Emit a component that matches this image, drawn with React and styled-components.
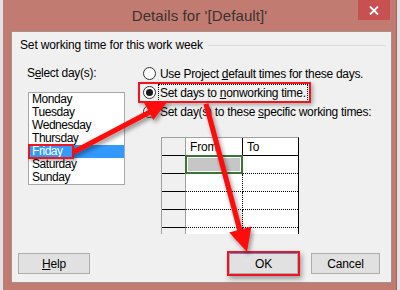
import React from "react"
import styled, { createGlobalStyle } from "styled-components"

const GlobalStyle = createGlobalStyle`
  html, body {
    margin: 0;
    padding: 0;
    background: #dfe3e8;
    overflow: hidden;
  }
  body {
    font-family: "Liberation Sans", Arial, sans-serif;
  }
`

const days = ["Monday", "Tuesday", "Wednesday", "Thursday", "Friday", "Saturday", "Sunday"]

const Frame = styled.div`
  position: relative;
  width: 394px;
  height: 290px;
  margin-left: 3px;
  background: #c27b70;
  box-sizing: border-box;
  border-right: 1px solid #a7665c;
  display: flex;
  flex-direction: column;
`

const TitleBar = styled.div`
  height: 31px;
  display: grid;
  grid-template-columns: 1fr auto 1fr;
  align-items: center;
`

const Title = styled.div`
  grid-column: 2;
  font-size: 15px;
  color: #3a3232;
  letter-spacing: 0.1px;
`

const CloseButton = styled.div`
  grid-column: 3;
  justify-self: end;
  align-self: start;
  width: 32px;
  height: 20px;
  margin-right: 6px;
  background: #c75050;
  display: flex;
  align-items: center;
  justify-content: center;
`

const Client = styled.div`
  flex: 0 0 252px;
  margin: 0 4px 0 8px;
  background: #f0f0f0;
  border: 1px solid #a58f8b;
  box-sizing: border-box;
  display: flex;
  flex-direction: column;
  font-size: 12px;
  letter-spacing: -0.15px;
  color: #000;
`

const GroupHeader = styled.div`
  height: 14px;
  margin: 6px 6px 0 8px;
  display: flex;
  align-items: center;
  gap: 5px;
  white-space: nowrap;
`

const Rule = styled.div`
  flex: 1;
  height: 0;
  border-top: 1px solid #dcdcdc;
`

const Main = styled.div`
  display: flex;
  margin: 14px 0 0 15px;
`

const LeftColumn = styled.div`
  width: 98px;
  display: flex;
  flex-direction: column;
`

const FieldLabel = styled.div`
  height: 14px;
  line-height: 14px;
  margin-bottom: 12px;
  letter-spacing: -0.3px;
`

const ListBox = styled.div`
  margin-left: 1px;
  width: 97px;
  background: #fff;
  border: 1px solid #a8a8a8;
  box-sizing: border-box;
  font-size: 12px;
  letter-spacing: -0.45px;
`

const ListItem = styled.div`
  position: relative;
  height: 13px;
  line-height: 13px;
  padding-left: 3px;
  background: ${p => (p.$selected ? "#3399ff" : "transparent")};
  color: ${p => (p.$selected ? "#fff" : "#000")};
`

const RedBox = styled.span`
  position: absolute;
  left: -1px;
  top: -1px;
  bottom: -1px;
  width: ${p => p.$w}px;
  border: 2px solid #f0141e;
  box-sizing: border-box;
  box-shadow: 2px 2px 3px rgba(0, 0, 0, 0.3);
`

const RightColumn = styled.div`
  margin-left: 18px;
  margin-top: -2px;
  display: flex;
  flex-direction: column;
`

const RadioRow = styled.div`
  position: relative;
  height: 19px;
  display: flex;
  align-items: center;
  gap: 4px;
  white-space: nowrap;
  letter-spacing: -0.3px;
`

const RadioCircle = styled.span`
  width: 13px;
  height: 13px;
  border-radius: 50%;
  border: 1px solid #333;
  background: #fff;
  box-sizing: border-box;
  display: flex;
  align-items: center;
  justify-content: center;
  &::after {
    content: "";
    width: 7px;
    height: 7px;
    border-radius: 50%;
    background: ${p => (p.$checked ? "#1a1a1a" : "transparent")};
  }
`

const RadioText = styled.span`
  padding: 1px 1px;
  border: 1px dotted ${p => (p.$focus ? "#000" : "transparent")};
  margin-left: -2px;
`

const RowHighlight = styled.span`
  position: absolute;
  left: -5px;
  top: -1px;
  bottom: -1px;
  width: 173px;
  border: 2px solid #f0141e;
  box-sizing: border-box;
  box-shadow: 2px 2px 4px rgba(0, 0, 0, 0.3);
`

const Grid = styled.div`
  margin: 16px 0 0 18px;
  width: 138px;
  height: 97px;
  overflow: hidden;
  background: #fff;
  border-top: 1px solid #a0a0a0;
  border-left: 1px solid #a0a0a0;
  border-right: 1px solid #000;
  box-sizing: border-box;
  display: grid;
  grid-template-columns: 24px 57px 1fr;
  grid-auto-rows: 18px;
`

const HeadCell = styled.div`
  border-bottom: 1px solid #000;
  border-right: ${p => (p.$last ? "none" : p.$corner ? "1px solid #a0a0a0" : "1px solid #000")};
  background: ${p => (p.$corner ? "#f0f0f0" : "#fff")};
  padding: 2px 0 0 4px;
  font-size: 12px;
  box-sizing: border-box;
`

const RowHead = styled.div`
  background: #f0f0f0;
  border-bottom: 1px solid #000;
  border-right: 1px solid #a0a0a0;
`

const Cell = styled.div`
  position: relative;
  border-bottom: 1px dotted #000;
  border-right: ${p => (p.$last ? "none" : "1px dotted #000")};
  ${p =>
    p.$active &&
    `
    border: 2px solid #3a7535;
    margin: -1px 0 0 -1px;
    box-shadow: inset 0 0 0 1px #fff;
    background: #c6c6c6;
  `}
`

const Footer = styled.div`
  margin-top: auto;
  padding: 0 11px 8px 6px;
  display: flex;
  align-items: center;
`

const Button = styled.div`
  width: ${p => p.$w}px;
  height: 21px;
  box-sizing: border-box;
  background: #e1e1e1;
  border: 1px solid #adadad;
  border-top-color: ${p => (p.$default ? "#4a90d9" : "#adadad")};
  display: flex;
  align-items: center;
  justify-content: center;
  font-size: 12px;
`

const ButtonHighlight = styled.div`
  margin: -2px;
  margin-left: auto;
  border: 2px solid #f0141e;
  box-shadow: 2px 3px 5px rgba(0, 0, 0, 0.35);
`

const Gap = styled.div`
  width: ${p => p.$w}px;
`

const Overlay = styled.svg`
  position: absolute;
  left: -3px;
  top: 0;
  pointer-events: none;
`

const Key = styled.u`
  text-decoration: underline;
`

export default function App() {
  const rows = [0, 1, 2, 3, 4]
  return (
    <>
      <GlobalStyle />
      <Frame>
        <TitleBar>
          <Title>Details for '[Default]'</Title>
          <CloseButton>
            <svg width="10" height="9" viewBox="0 0 10 9">
              <path d="M1 0.5 L9 8.5 M9 0.5 L1 8.5" stroke="#fff" strokeWidth="1.8" />
            </svg>
          </CloseButton>
        </TitleBar>
        <Client>
          <GroupHeader>
            Set working time for this work week
            <Rule />
          </GroupHeader>
          <Main>
            <LeftColumn>
              <FieldLabel>
                S<Key>e</Key>lect day(s):
              </FieldLabel>
              <ListBox>
                {days.map(d => (
                  <ListItem key={d} $selected={d === "Friday"}>
                    {d}
                    {d === "Friday" && <RedBox $w={46} />}
                  </ListItem>
                ))}
              </ListBox>
            </LeftColumn>
            <RightColumn>
              <RadioRow>
                <RadioCircle />
                <RadioText>
                  Use Project <Key>d</Key>efault times for these days.
                </RadioText>
              </RadioRow>
              <RadioRow>
                <RadioCircle $checked />
                <RadioText $focus>
                  Set days to <Key>n</Key>onworking time.
                </RadioText>
                <RowHighlight />
              </RadioRow>
              <RadioRow>
                <RadioCircle />
                <RadioText>
                  Set day(s) to these <Key>s</Key>pecific working times:
                </RadioText>
              </RadioRow>
              <Grid>
                <HeadCell $corner />
                <HeadCell>From</HeadCell>
                <HeadCell $last>To</HeadCell>
                {rows.map(r => (
                  <React.Fragment key={r}>
                    <RowHead />
                    <Cell $active={r === 0} />
                    <Cell $last />
                  </React.Fragment>
                ))}
              </Grid>
            </RightColumn>
          </Main>
          <Footer>
            <Button $w={72}>
              <span>
                <Key>H</Key>elp
              </span>
            </Button>
            <ButtonHighlight>
              <Button $w={69} $default>
                OK
              </Button>
            </ButtonHighlight>
            <Gap $w={13} />
            <Button $w={69}>Cancel</Button>
          </Footer>
        </Client>
        <Overlay width="400" height="290" viewBox="0 0 400 290">
          <defs>
            <filter id="sh" x="-20%" y="-20%" width="140%" height="140%">
              <feDropShadow dx="2" dy="3" stdDeviation="2" floodColor="#000" floodOpacity="0.4" />
            </filter>
          </defs>
          <g filter="url(#sh)" fill="#ff0d0d" stroke="none">
            <path d="M72 150 L152 108 L154.5 112.6 L74.5 154.6 Z" />
            <polygon points="168,101 153.3,120.1 143.9,102.5" />
            <path d="M203.5 104.5 L208.5 103.2 L243 232 L238 233.3 Z" />
            <polygon points="247,252 251.4,226.5 229.2,232.4" />
          </g>
        </Overlay>
      </Frame>
    </>
  )
}
